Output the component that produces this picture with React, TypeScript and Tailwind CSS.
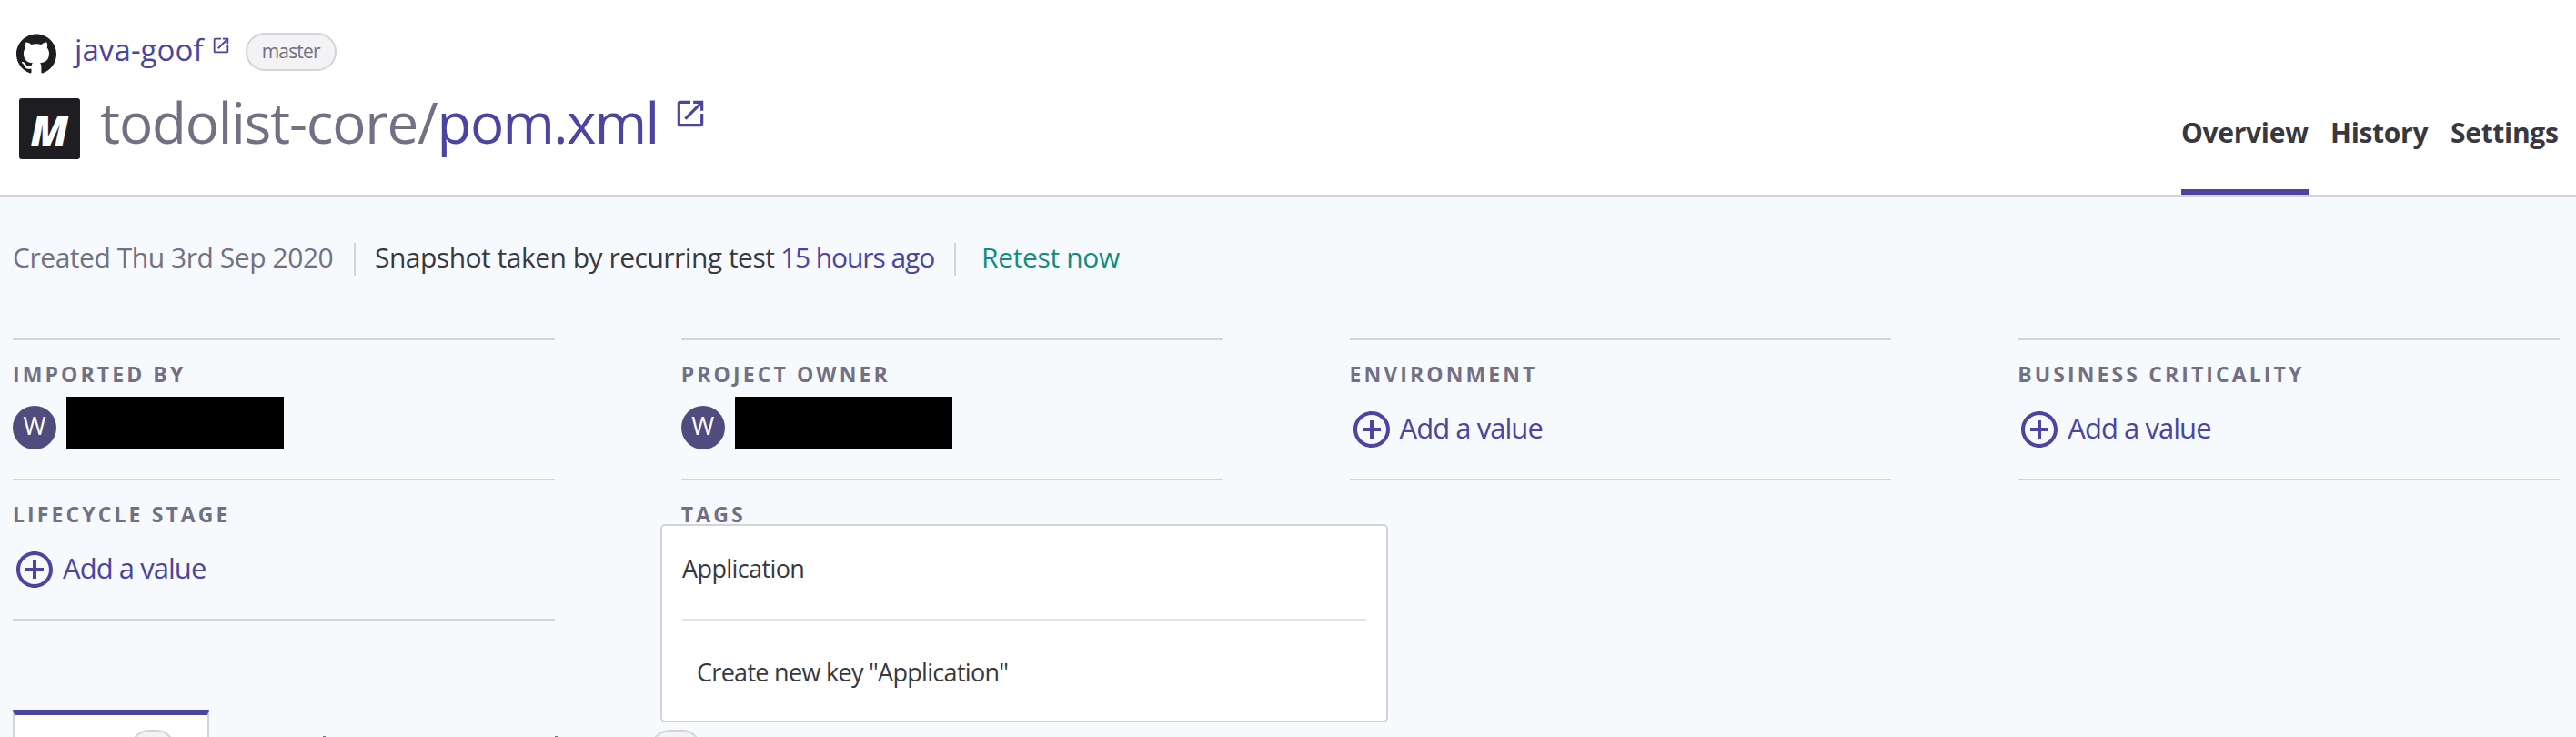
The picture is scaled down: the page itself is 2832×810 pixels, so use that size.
import type { ReactNode } from "react";
import { MdAddCircleOutline, MdOpenInNew } from "react-icons/md";
import { SiGithub } from "react-icons/si";

function Field({ label, children }: { label: string; children?: ReactNode }) {
  return (
    <div className="h-[156px] border-y-2 border-[#d3d3d9] pt-[22px]">
      <div className="text-[23px] leading-[30px] font-bold tracking-[3.1px] text-[#727184]">{label}</div>
      {children}
    </div>
  );
}

function AddValue() {
  return (
    <a className="mt-2.5 flex h-[72px] items-center gap-[7px] text-[#4b45a1]">
      <MdAddCircleOutline size={48} />
      <span className="-mt-1 text-[31px] leading-10 tracking-[-0.95px]">Add a value</span>
    </a>
  );
}

function Person() {
  return (
    <div className="mt-2.5 flex h-[58px] items-end gap-[11px]">
      <div className="flex size-12 items-center justify-center rounded-full bg-[#504c7e] text-[27px] leading-10 text-white">
        <span className="-mt-1">W</span>
      </div>
      <div className="h-[58px] w-[239px] bg-black" />
    </div>
  );
}

export default function App() {
  return (
    <div className="h-[810px] overflow-hidden bg-[#f7fafd] font-['Open_Sans',sans-serif] text-[#383840]">
      <header className="flex h-[216px] justify-between border-b-2 border-[#d3d3d9] bg-white px-[18px]">
        <div className="pt-9">
          <div className="flex h-[42px] items-center">
            <SiGithub size={44} className="mt-1 text-[#1e1d21]" />
            <a className="-mt-1 ml-5 text-[33px] leading-[38px] tracking-[0.1px] text-[#4b45a1]">java-goof</a>
            <MdOpenInNew size={22} className="-mt-[15px] ml-2 text-[#4b45a1]" />
            <span className="ml-4 flex h-[42px] w-[100px] items-center justify-center rounded-full border-2 border-[#d3d3d9] bg-[#f3f3f6] pb-0.5 text-[21px] leading-6 tracking-[-0.8px] text-[#727184]">
              master
            </span>
          </div>
          <div className="mt-[30px] flex h-[68px] items-start">
            <div className="ml-[3px] flex size-[67px] items-center justify-center rounded-[3px] bg-[#1e1d21] text-[46px] leading-none font-extrabold text-white italic">
              M
            </div>
            <h1 className="ml-[22px] flex text-[62px] leading-[52px] text-[#727184]">
              <span className="tracking-[-1.2px]">todolist-core/</span>
              <a className="tracking-[-1.65px] text-[#4b45a1]">pom.xml</a>
            </h1>
            <MdOpenInNew size={38} className="-mt-0.5 ml-[17px] text-[#4b45a1]" />
          </div>
        </div>
        <nav className="flex gap-6 self-end text-[30px] leading-10 font-bold tracking-[-0.3px]">
          <a className="w-[140px] border-b-[6px] border-[#4b45a1] pb-[42px]">Overview</a>
          <a className="w-[108px] border-b-[6px] border-transparent pb-[42px]">History</a>
          <a className="w-[120px] border-b-[6px] border-transparent pb-[42px]">Settings</a>
        </nav>
      </header>

      <main className="relative pt-[51px] pr-[18px] pl-3.5">
        <div className="flex h-9 items-start text-[30px] leading-[31px]">
          <span className="w-[375px] tracking-[-0.45px] text-[#727184]">Created Thu 3rd Sep 2020</span>
          <span className="h-9 w-0.5 bg-[#d3d3d9]" />
          <span className="ml-[21px] w-[446px] tracking-[-0.5px] whitespace-nowrap">Snapshot taken by recurring test</span>
          <a className="w-[191px] tracking-[-1.1px] text-[#4b45a1]">15 hours ago</a>
          <span className="h-9 w-0.5 bg-[#d3d3d9]" />
          <a className="ml-[28px] tracking-[-0.35px] text-[#118c80]">Retest now</a>
        </div>

        <section className="mt-[69px] grid auto-rows-[154px] grid-cols-4 gap-x-[139px]">
          <Field label="IMPORTED BY"><Person /></Field>
          <Field label="PROJECT OWNER"><Person /></Field>
          <Field label="ENVIRONMENT"><AddValue /></Field>
          <Field label="BUSINESS CRITICALITY"><AddValue /></Field>
          <Field label="LIFECYCLE STAGE"><AddValue /></Field>
          <Field label="TAGS" />
        </section>

        <div className="absolute top-[360px] left-[726px] h-[218px] w-[800px] rounded-[5px] border-2 border-[#d3d3d9] bg-white px-[22px]">
          <div className="flex h-[104px] items-center border-b-2 border-[#e4e4e8] pb-[7px] text-[27px] tracking-[-0.6px]">Application</div>
          <div className="flex h-[110px] items-center pt-1 pl-4 text-[27px] tracking-[-0.7px]">Create new key "Application"</div>
        </div>

        <div className="mt-[100px] flex h-[60px] items-start">
          <div className="flex h-[60px] w-[216px] justify-end border-x-2 border-t-[6px] border-x-[#d3d3d9] border-t-[#4b45a1] bg-white pt-4 pr-[35px]">
            <span className="h-[42px] w-[50px] rounded-full border-2 border-[#d3d3d9] bg-[#f3f3f6]" />
          </div>
          <span className="mt-[29px] ml-[125px] h-3 w-[3px] bg-[#727184]" />
          <span className="mt-[29px] ml-[252px] h-3 w-[3px] bg-[#727184]" />
          <span className="mt-[22px] ml-[102px] h-[42px] w-[56px] rounded-full border-2 border-[#d3d3d9] bg-[#f3f3f6]" />
        </div>
      </main>
    </div>
  );
}
